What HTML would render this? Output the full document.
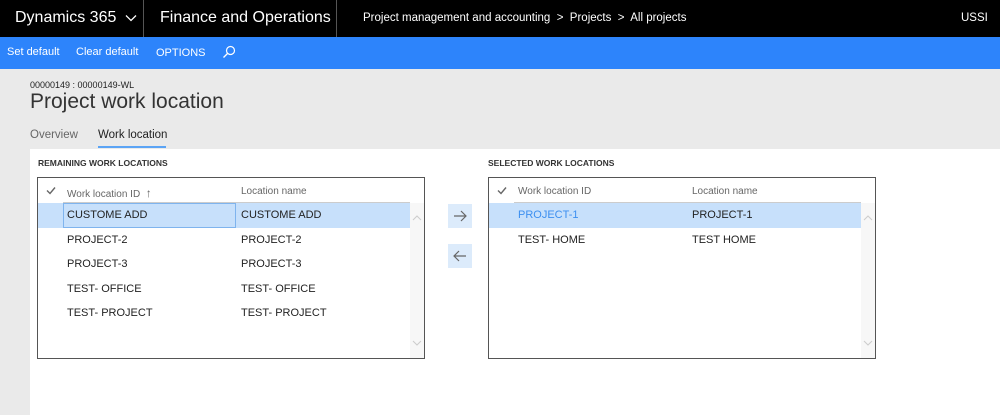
<!DOCTYPE html>
<html><head><style>
*{margin:0;padding:0;box-sizing:border-box}
body{width:1000px;height:415px;background:#eaeaea;font-family:"Segoe UI","Liberation Sans",sans-serif;position:relative;overflow:hidden;color:#222}
.a{position:absolute;white-space:nowrap}
.top{left:0;top:0;width:1000px;height:37px;background:#000;color:#fff}
.blue{left:0;top:37px;width:1000px;height:32px;background:#2d84fb;color:#fff;font-size:11px}
.panel{left:30px;top:149px;width:970px;height:266px;background:#fff}
.grid{position:absolute;width:388px;height:182px;border:1px solid #555;background:#fff}
.hd{position:absolute;top:8px;font-size:10px;color:#666}
.row{position:absolute;left:0;width:372px;height:25px;font-size:11px}
.row span{position:absolute;top:6px}
.sb{position:absolute;right:0;top:25px;width:14px;height:155px;background:#f7f7f7}
.sec{font-size:8.5px;font-weight:bold;color:#333}
.btn{position:absolute;left:448px;width:24px;height:24px;background:#dcebfb}
</style></head><body>
<div class="a top">
 <div class="a" style="left:15px;top:9px;font-size:16px">Dynamics 365 <svg width="12" height="8" style="margin-left:4px" viewBox="0 0 12 8"><path d="M1 1.5l5 5 5-5" stroke="#fff" fill="none" stroke-width="1.3"/></svg></div>
 <div class="a" style="left:143px;top:0;width:1px;height:37px;background:#555"></div>
 <div class="a" style="left:160px;top:9px;font-size:16px">Finance and Operations</div>
 <div class="a" style="left:336px;top:0;width:1px;height:37px;background:#555"></div>
 <div class="a" style="left:363px;top:12px;font-size:11.5px">Project management and accounting &nbsp;&gt;&nbsp; Projects &nbsp;&gt;&nbsp; All projects</div>
 <div class="a" style="left:961px;top:12px;font-size:11.5px">USSI</div>
</div>
<div class="a blue">
 <div class="a" style="left:7px;top:9px">Set default</div>
 <div class="a" style="left:76px;top:9px">Clear default</div>
 <div class="a" style="left:156px;top:10px">OPTIONS</div>
 <svg class="a" style="left:222px;top:8px" width="14" height="14" viewBox="0 0 14 14"><circle cx="8.5" cy="5.5" r="4" stroke="#fff" fill="none" stroke-width="1.2"/><path d="M5.5 8.5L1.5 12.5" stroke="#fff" stroke-width="1.3"/></svg>
</div>
<div class="a" style="left:30px;top:80px;font-size:9px">00000149 : 00000149-WL</div>
<div class="a" style="left:30px;top:90px;font-size:21px;color:#333">Project work location</div>
<div class="a" style="left:30px;top:129px;font-size:11.5px;color:#666">Overview</div>
<div class="a" style="left:98px;top:129px;font-size:11.5px;color:#222">Work location</div>
<div class="a" style="left:98px;top:146px;width:68px;height:2px;background:#5ba4f5"></div>
<div class="a panel"></div>
<div class="a sec" style="left:38px;top:158px">REMAINING WORK LOCATIONS</div>
<div class="a sec" style="left:488px;top:158px">SELECTED WORK LOCATIONS</div>

<div class="grid" style="left:37px;top:177px">
 <svg style="position:absolute;left:8px;top:8px" width="10" height="9"><path d="M1 4.5l3 3 5-6" stroke="#666" fill="none" stroke-width="1.4"/></svg>
 <div class="hd" style="left:29px">Work location ID &nbsp;<span style="font-size:12px">↑</span></div>
 <div class="hd" style="left:203px">Location name</div>
 <div style="position:absolute;left:25px;top:24px;width:347px;height:1px;background:#ccc"></div>
 <div class="row" style="top:25px;background:#c7e0fb"><div style="position:absolute;left:25px;top:0;width:173px;height:25px;border:1px solid #7fb4ee"></div><span style="left:29px">CUSTOME ADD</span><span style="left:203px">CUSTOME ADD</span></div>
 <div class="row" style="top:50px"><span style="left:29px">PROJECT-2</span><span style="left:203px">PROJECT-2</span></div>
 <div class="row" style="top:74px"><span style="left:29px">PROJECT-3</span><span style="left:203px">PROJECT-3</span></div>
 <div class="row" style="top:99px"><span style="left:29px">TEST- OFFICE</span><span style="left:203px">TEST- OFFICE</span></div>
 <div class="row" style="top:123px"><span style="left:29px">TEST- PROJECT</span><span style="left:203px">TEST- PROJECT</span></div>
 <div class="sb"><svg style="position:absolute;left:2px;top:12px" width="10" height="6"><path d="M1 5l4-4 4 4" stroke="#ccc" fill="none"/></svg><svg style="position:absolute;left:2px;top:137px" width="10" height="6"><path d="M1 1l4 4 4-4" stroke="#ccc" fill="none"/></svg></div>
</div>

<svg class="btn" style="top:204px" viewBox="0 0 24 24"><path d="M6 12h12M13 7l5 5-5 5" stroke="#666" fill="none" stroke-width="1.2"/></svg>
<svg class="btn" style="top:244px" viewBox="0 0 24 24"><path d="M18 12H6M11 7l-5 5 5 5" stroke="#666" fill="none" stroke-width="1.2"/></svg>

<div class="grid" style="left:488px;top:177px">
 <svg style="position:absolute;left:8px;top:8px" width="10" height="9"><path d="M1 4.5l3 3 5-6" stroke="#666" fill="none" stroke-width="1.4"/></svg>
 <div class="hd" style="left:29px">Work location ID</div>
 <div class="hd" style="left:203px">Location name</div>
 <div style="position:absolute;left:25px;top:24px;width:347px;height:1px;background:#ccc"></div>
 <div class="row" style="top:25px;background:#c7e0fb"><span style="left:29px;color:#3c8ff0">PROJECT-1</span><span style="left:203px">PROJECT-1</span></div>
 <div class="row" style="top:50px"><span style="left:29px">TEST- HOME</span><span style="left:203px">TEST HOME</span></div>
 <div class="sb"><svg style="position:absolute;left:2px;top:12px" width="10" height="6"><path d="M1 5l4-4 4 4" stroke="#ccc" fill="none"/></svg><svg style="position:absolute;left:2px;top:137px" width="10" height="6"><path d="M1 1l4 4 4-4" stroke="#ccc" fill="none"/></svg></div>
</div>
</body></html>
